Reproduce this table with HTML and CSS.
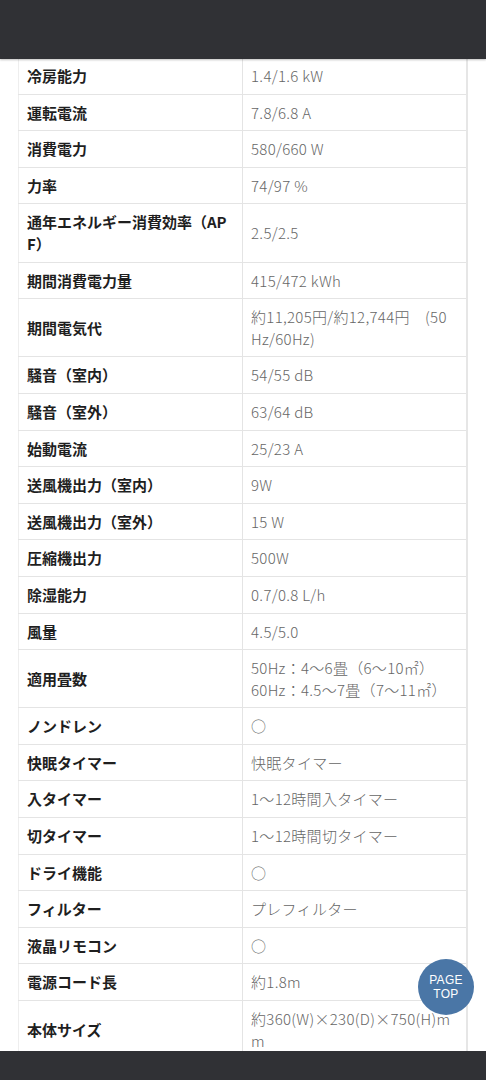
FILE: index.html
```html
<!DOCTYPE html>
<html lang="ja">
<head>
<meta charset="utf-8">
<title>仕様</title>
<link rel="stylesheet" href="styles.css">
</head>
<body>
<header class="topbar"></header>
<main class="content">
  <table class="spec">
    <tbody>
      <tr class="first"><th>冷房能力</th><td>1.4/1.6 kW</td></tr>
      <tr><th>運転電流</th><td>7.8/6.8 A</td></tr>
      <tr><th>消費電力</th><td>580/660 W</td></tr>
      <tr><th>力率</th><td>74/97 %</td></tr>
      <tr><th>通年エネルギー消費効率（APF）</th><td>2.5/2.5</td></tr>
      <tr><th>期間消費電力量</th><td>415/472 kWh</td></tr>
      <tr><th>期間電気代</th><td>約11,205円/約12,744円　(50Hz/60Hz)</td></tr>
      <tr><th>騒音（室内）</th><td>54/55 dB</td></tr>
      <tr><th>騒音（室外）</th><td>63/64 dB</td></tr>
      <tr><th>始動電流</th><td>25/23 A</td></tr>
      <tr><th>送風機出力（室内）</th><td>9W</td></tr>
      <tr><th>送風機出力（室外）</th><td>15 W</td></tr>
      <tr><th>圧縮機出力</th><td>500W</td></tr>
      <tr><th>除湿能力</th><td>0.7/0.8 L/h</td></tr>
      <tr><th>風量</th><td>4.5/5.0</td></tr>
      <tr><th>適用畳数</th><td>50Hz：4～6畳（6～10㎡）<br>60Hz：4.5～7畳（7～11㎡）</td></tr>
      <tr><th>ノンドレン</th><td>○</td></tr>
      <tr><th>快眠タイマー</th><td>快眠タイマー</td></tr>
      <tr><th>入タイマー</th><td>1～12時間入タイマー</td></tr>
      <tr><th>切タイマー</th><td>1～12時間切タイマー</td></tr>
      <tr><th>ドライ機能</th><td>○</td></tr>
      <tr><th>フィルター</th><td>プレフィルター</td></tr>
      <tr><th>液晶リモコン</th><td>○</td></tr>
      <tr><th>電源コード長</th><td>約1.8m</td></tr>
      <tr><th>本体サイズ</th><td>約360(W)×230(D)×750(H)mm</td></tr>
    </tbody>
  </table>
</main>
<a class="pagetop" href="#">PAGE<br>TOP</a>
<footer class="bottombar"></footer>
</body>
</html>
```
FILE: styles.css
```css
html, body {
  margin: 0;
  padding: 0;
  background: #ffffff;
  overflow: hidden;
}
body {
  font-family: "Noto Sans CJK JP", "Noto Sans", sans-serif;
  height: 1080px;
}
.topbar {
  height: 59px;
  background: #303135;
  box-shadow: 0 1px 2px rgba(0,0,0,0.25);
  position: relative;
  z-index: 2;
}
.content {
  padding: 0 18px;
}
.spec {
  width: 450px;
  border-collapse: collapse;
  table-layout: fixed;
  font-size: 15px;
  line-height: 21.6px;
  border-left: 1px solid #eeeeee;
  border-right: 2px solid #e6e6e6;
}
.spec th, .spec td {
  padding: 7px 8px 7px 8px;
  border-top: 1px solid #e4e4e4;
  vertical-align: middle;
  text-align: left;
  word-break: break-all;
}
.spec tr.first th, .spec tr.first td {
  border-top: none;
  padding-top: 6px;
}
.spec th {
  width: 207px;
  font-weight: 700;
  color: #1f1f1f;
}
.spec td {
  color: #666666;
  font-weight: 300;
  letter-spacing: 0.3px;
  padding-right: 14px;
  border-left: 1px solid #e4e4e4;
}
.pagetop {
  position: fixed;
  right: 12px;
  bottom: 65px;
  width: 56px;
  height: 56px;
  border-radius: 50%;
  background: #4a76a6;
  color: #ffffff;
  font-family: "Liberation Sans", Arial, sans-serif;
  font-size: 12px;
  line-height: 14px;
  letter-spacing: 0.3px;
  text-align: center;
  text-decoration: none;
  display: flex;
  align-items: center;
  justify-content: center;
  z-index: 3;
}
.bottombar {
  position: fixed;
  left: 0;
  right: 0;
  bottom: 0;
  height: 29px;
  background: #303135;
  z-index: 2;
}
```
